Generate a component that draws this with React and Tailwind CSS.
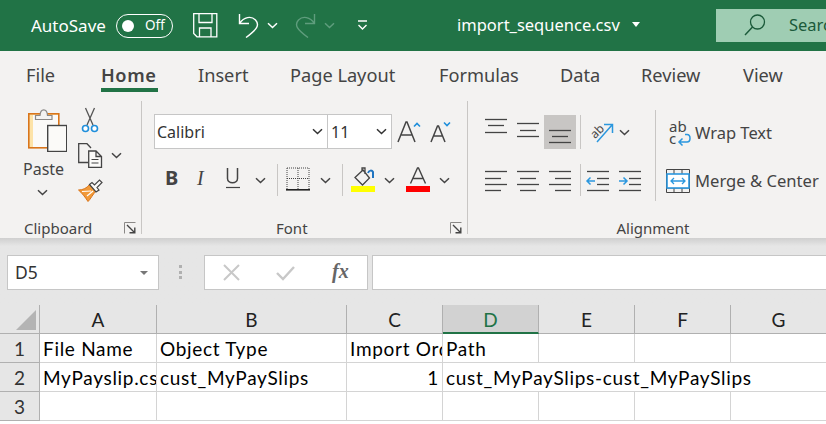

const UI = { fontFamily: '"Noto Sans", "Open Sans", sans-serif' };

function Chevron({ className = "", color = "#444" }) {
  return (
    <svg width="11" height="7" viewBox="0 0 11 7" className={"shrink-0 " + className}>
      <path d="M1 1.2 L5.5 5.5 L10 1.2" fill="none" stroke={color} strokeWidth="1.5" />
    </svg>
  );
}

function Launcher() {
  return (
    <svg width="12" height="12" viewBox="0 0 12 12" className="shrink-0">
      <path d="M.5 11.5V.5H11.5" fill="none" stroke="#8a8886" strokeWidth="1" />
      <path d="M3 3 L10 10 M10.8 5.5V10.8H5.5" fill="none" stroke="#444" strokeWidth="1.4" />
    </svg>
  );
}

function Lines({ lines, children }) {
  return (
    <svg width="32" height="34" viewBox="0 0 32 34" className="shrink-0">
      {lines.map(([a, b, y], i) => (
        <path key={i} d={`M${a} ${y + 0.5}H${b}`} stroke="#444" strokeWidth="1.3" />
      ))}
      {children}
    </svg>
  );
}

function Sep({ className }) {
  return <div className={"w-px bg-[#c8c6c4] shrink-0 " + className} />;
}

function TitleBar() {
  return (
    <div className="h-[51px] bg-[#217346] flex items-center text-white shrink-0">
      <span className="ml-[31px] w-[85px] text-[17px] leading-none whitespace-nowrap">AutoSave</span>
      <div className="w-[57px] h-[24px] rounded-full border border-white flex items-center pl-[5px] shrink-0">
        <span className="w-[12px] h-[12px] rounded-full bg-white" />
        <span className="ml-[11px] text-[13.5px] leading-none">Off</span>
      </div>
      <svg width="25" height="25" viewBox="0 0 25 25" className="ml-[20px] shrink-0">
        <path d="M.7.7H23.8V23.8H4L.7 20.5Z M6 .7V9.5H19V.7 M6.5 23.8V15H18V23.8" fill="none" stroke="#fff" strokeWidth="1.3" />
      </svg>
      <svg width="24" height="25" viewBox="0 0 24 25" className="ml-[18px] shrink-0">
        <path d="M3.5 1V10.5H13 M3.5 10.5C8 4 15 2.5 19.5 7C24 12 21 16.5 10 24.5" fill="none" stroke="#fff" strokeWidth="1.4" />
      </svg>
      <Chevron className="ml-[7px]" color="#fff" />
      <svg width="24" height="25" viewBox="0 0 24 25" className="ml-[16px] shrink-0">
        <path d="M20.5 1V10.5H11 M20.5 10.5C16 4 9 2.5 4.5 7C0 12 3 16.5 14 24.5" fill="none" stroke="#5f9d7d" strokeWidth="1.4" />
      </svg>
      <Chevron className="ml-[6px]" color="#5f9d7d" />
      <svg width="11" height="11" viewBox="0 0 11 11" className="ml-[22px] shrink-0">
        <path d="M1 1H10 M1.5 5 L5.5 9 L9.5 5" fill="none" stroke="#fff" strokeWidth="1.4" />
      </svg>
      <span className="ml-[89px] w-[175px] text-[16.5px] leading-none whitespace-nowrap">import_sequence.csv</span>
      <span className="w-0 h-0 border-x-[4.5px] border-x-transparent border-t-[5px] border-t-white shrink-0 mt-[-2px]" />
      <div className="ml-[76px] flex-1 h-[33px] mb-[1px] bg-[#9fcdb3] flex items-center overflow-hidden text-[#1b5a3a]">
        <svg width="22" height="22" viewBox="0 0 22 22" className="ml-[28px] shrink-0">
          <circle cx="13.5" cy="8" r="7" fill="none" stroke="#1b5a3a" strokeWidth="1.3" />
          <path d="M8.5 13 L1 21" stroke="#1b5a3a" strokeWidth="1.4" />
        </svg>
        <span className="ml-[23px] text-[16.5px] leading-none whitespace-nowrap">Search</span>
      </div>
    </div>
  );
}

const tabs = [
  ["File", "w-[75px]"],
  ["Home", "w-[97px] font-semibold tracking-[0.6px]"],
  ["Insert", "w-[92px]"],
  ["Page Layout", "w-[149px]"],
  ["Formulas", "w-[121px]"],
  ["Data", "w-[81px]"],
  ["Review", "w-[102px]"],
  ["View", "w-[60px]"],
];

function Tabs() {
  return (
    <div className="h-[49px] flex pl-[26px] pt-[11px] text-[#444] text-[18.2px] leading-[26px] shrink-0">
      {tabs.map(([t, w]) => (
        <div key={t} className={"shrink-0 whitespace-nowrap " + w}>
          <span className="inline-flex flex-col">
            {t}
            {t === "Home" && <span className="h-[4px] bg-[#217346] mt-0 w-[57px]" />}
          </span>
        </div>
      ))}
    </div>
  );
}

function Clipboard() {
  return (
    <div className="w-[142px] h-[133px] mt-px border-r border-[#c8c6c4] flex flex-col shrink-0">
      <div className="flex pl-[23px] text-[#444]">
        <div className="w-[46px] flex flex-col items-start pt-[6px]">
          <svg width="42" height="45" viewBox="0 0 42 45" className="ml-[2px]">
            <rect x="3.8" y="6.8" width="30" height="34" fill="#fde3a8" stroke="#d9751b" strokeWidth="1.6" />
            <rect x="8" y="8" width="25" height="32" fill="#fbfaf8" />
            <path d="M10.5 12.5V8.5H15C15.5 1 22 1 22.5 8.5H27V12.5Z" fill="#f3f2f1" stroke="#8a8886" strokeWidth="1.2" />
            <rect x="23.7" y="19" width="19" height="26" transform="translate(-1 -.5)" fill="#fbfaf8" stroke="#444" strokeWidth="1.4" />
          </svg>
          <span className="text-[16px] leading-[22px] mt-[6px]">Paste</span>
          <Chevron className="mt-[9px] ml-[14px]" />
        </div>
        <div className="ml-[9px] flex flex-col pt-[6px]">
          <svg width="24" height="26" viewBox="0 0 24 26" className="shrink-0">
            <path d="M7.5 1 L15 18 M16.5 1 L9 18" stroke="#555" strokeWidth="1.3" fill="none" />
            <circle cx="7.5" cy="21.5" r="3" fill="#fff" stroke="#1f8fdb" strokeWidth="1.6" />
            <circle cx="16.5" cy="21.5" r="3" fill="#fff" stroke="#1f8fdb" strokeWidth="1.6" />
          </svg>
          <div className="flex items-center mt-[10px]">
            <svg width="25" height="25" viewBox="0 0 25 25" className="shrink-0">
              <path d="M10 19.5H.7V.7H9L13 5" fill="none" stroke="#444" strokeWidth="1.3" />
              <path d="M10.7 8H18L23.5 13.5V24.3H10.7Z M18 8V13.5H23.5" fill="#fbfaf8" stroke="#444" strokeWidth="1.3" />
              <path d="M13.5 16.5H20.5M13.5 20H20.5" stroke="#444" strokeWidth="1.1" />
            </svg>
            <Chevron className="ml-[8px]" />
          </div>
          <svg width="25" height="23" viewBox="0 0 25 23" className="shrink-0 mt-[11px]">
            <path d="M0.5 11 C5 11 9 9 11.5 5.5 L18 12 C15 15 12 21 10 22.5 C7 18 4 14 0.5 11Z" fill="#f19938" stroke="#d9751b" strokeWidth="1" />
            <path d="M4 12.5 L13 12 M9 17 L15 12" stroke="#fff" strokeWidth="1.2" fill="none" />
            <path d="M11.5 5.5 L14 3.5 L16.5 6 L21.5 1 L24 3.5 L19 8.5 L21 11 L18 13Z" fill="#fbfaf8" stroke="#444" strokeWidth="1.2" />
          </svg>
        </div>
      </div>
      <div className="mt-auto mb-[-4px] flex items-center pl-[24px] text-[#444] text-[15px] leading-[20px]">
        <span className="w-[100px]">Clipboard</span>
        <Launcher />
      </div>
    </div>
  );
}

function FontGroup() {
  return (
    <div className="w-[326px] h-[133px] mt-px border-r border-[#c8c6c4] flex flex-col shrink-0 text-[#444]">
      <div className="flex items-center pl-[12px] pt-[13px]">
        <div className="w-[174px] h-[35px] bg-white border border-[#c6c6c6] flex items-center pl-[2px] pr-[4px] text-[16px] text-[#333] shrink-0">
          <span className="flex-1">Calibri</span>
          <Chevron color="#333" />
        </div>
        <div className="w-[64px] h-[35px] bg-white border border-l-0 border-[#c6c6c6] flex items-center pl-[3px] pr-[4px] text-[16px] text-[#333] shrink-0">
          <span className="flex-1">11</span>
          <Chevron color="#333" />
        </div>
        <svg width="24" height="24" viewBox="0 0 24 24" className="ml-[5px] shrink-0">
          <path d="M1 22 L9 2 H10 L18 22 M4.5 15 H14.5" fill="none" stroke="#444" strokeWidth="1.5" />
          <path d="M17 6.5 L20 3.5 L23 6.5" fill="none" stroke="#1f8fdb" strokeWidth="1.6" />
        </svg>
        <svg width="22" height="24" viewBox="0 0 22 24" className="ml-[9px] shrink-0">
          <path d="M1 22 L7.5 6 H8.5 L15 22 M3.5 16 H12.5" fill="none" stroke="#444" strokeWidth="1.5" />
          <path d="M14 2.5 L17 5.5 L20 2.5" fill="none" stroke="#1f8fdb" strokeWidth="1.6" />
        </svg>
      </div>
      <div className="flex items-center h-[32px] mt-[15px] pl-[23px]">
        <span className="w-[26px] text-[20px] font-bold leading-none mt-[-5px]">B</span>
        <span className="w-[34px] text-[20px] italic leading-none pl-[6px] mt-[-5px] font-['Liberation_Serif']">I</span>
        <svg width="16" height="22" viewBox="0 0 16 22" className="shrink-0 mt-[-4px]">
          <path d="M2.5 1V11.5C2.5 17 12.5 17 12.5 11.5V1" fill="none" stroke="#444" strokeWidth="1.5" />
          <path d="M1 20.5H15" stroke="#444" strokeWidth="1.2" />
        </svg>
        <Chevron className="ml-[14px]" />
        <Sep className="h-[32px] ml-[11px]" />
        <svg width="24" height="24" viewBox="0 0 24 24" className="ml-[8px] shrink-0 mt-[-2px]">
          <path d="M1 1H23V22M1 1V22M12 1V22M1 11.5H23" fill="none" stroke="#444" strokeWidth="1" strokeDasharray="1 1" />
          <path d="M0 22.8H24" stroke="#222" strokeWidth="1.6" />
        </svg>
        <Chevron className="ml-[10px]" />
        <Sep className="h-[32px] ml-[11px]" />
        <svg width="24" height="25" viewBox="0 0 24 25" className="ml-[8px] shrink-0 mt-[-2px]">
          <path d="M4 10.5 L12 3 L18.5 11 L11.5 18 Z M11 4 V1 H14 V7" fill="none" stroke="#444" strokeWidth="1.3" />
          <path d="M17 6 C18 3 21 3 22 5 V11" fill="none" stroke="#1f74c0" strokeWidth="2" />
          <rect y="19" width="24" height="6" fill="#ffff00" />
        </svg>
        <Chevron className="ml-[9px]" />
        <svg width="24" height="25" viewBox="0 0 24 25" className="ml-[11px] shrink-0 mt-[-2px]">
          <path d="M4.5 16.5 L11.5 1 H12.5 L19.5 16.5 M7 11.5 H17" fill="none" stroke="#444" strokeWidth="1.4" />
          <rect y="19" width="24" height="6" fill="#ff0000" />
        </svg>
        <Chevron className="ml-[9px]" />
      </div>
      <div className="mt-auto mb-[-4px] flex items-center text-[15px] leading-[20px]">
        <span className="ml-[134px] w-[174px]">Font</span>
        <Launcher />
      </div>
    </div>
  );
}

const A = 5;
const B = 27;

function Alignment() {
  return (
    <div className="w-[370px] h-[133px] mt-px flex flex-col shrink-0 text-[#444]">
      <div className="flex h-[91px] mt-[9px]">
        <div className="w-[188px] h-[91px] border-r border-[#c8c6c4] pl-[12px] pt-[5px] shrink-0">
          <div className="flex items-center h-[34px]">
            <Lines lines={[[A, B, 4], [8, 24, 10], [A, B, 17]]} />
            <Lines lines={[[A, B, 8], [8, 24, 15], [A, B, 21]]} />
            <div className="w-[32px] h-[34px] bg-[#c8c6c4] shrink-0">
              <Lines lines={[[A, B, 15], [8, 24, 21], [A, B, 27]]} />
            </div>
            <Sep className="h-[34px] ml-[4px]" />
            <svg width="25" height="24" viewBox="0 0 25 24" className="ml-[8px] shrink-0">
              <text x="0" y="15" transform="rotate(-45 8 10)" fontSize="12" fill="#444" fontFamily="Noto Sans">ab</text>
              <path d="M8 22 L23 5 M15 4.5 H23.5 V13" fill="none" stroke="#2b97de" strokeWidth="1.5" />
            </svg>
            <Chevron className="ml-[5px]" />
          </div>
          <div className="flex items-center h-[32px] mt-[15px]">
            <Lines lines={[[A, B, 8], [A, 21, 15], [A, B, 21], [A, 21, 27]]} />
            <Lines lines={[[A, B, 8], [8, 24, 15], [A, B, 21], [8, 24, 27]]} />
            <Lines lines={[[A, B, 8], [11, B, 15], [A, B, 21], [11, B, 27]]} />
            <Sep className="h-[32px] ml-[4px]" />
            <div className="ml-px">
              <Lines lines={[[5, 27, 8], [15, 27, 15], [15, 27, 21], [5, 27, 27]]}>
                <path d="M5 18 H13 M8.5 14.5 L5 18 L8.5 21.5" fill="none" stroke="#2b97de" strokeWidth="1.5" />
              </Lines>
            </div>
            <Lines lines={[[5, 27, 8], [15, 27, 15], [15, 27, 21], [5, 27, 27]]}>
              <path d="M5 18 H13 M9.5 14.5 L13 18 L9.5 21.5" fill="none" stroke="#2b97de" strokeWidth="1.5" />
            </Lines>
          </div>
        </div>
        <div className="pl-[10px] pt-[8px] flex flex-col">
          <div className="flex items-center h-[32px]">
            <div className="w-[29px] h-[28px] relative shrink-0 pl-[3px] text-[15px] leading-[12px] text-[#444]">
              <span className="block">ab</span>
              <span className="block">c</span>
              <svg width="14" height="13" viewBox="0 0 14 13" className="absolute left-[11px] top-[13px]">
                <path d="M8 1.5 H10 C14 1.5 14 9 10 9 H2 M5.5 5.5 L2 9 L5.5 12.5" fill="none" stroke="#2b97de" strokeWidth="1.5" />
              </svg>
            </div>
            <span className="text-[16.5px] leading-none whitespace-nowrap mt-[-2px]">Wrap Text</span>
          </div>
          <div className="flex items-center h-[32px] mt-[15px]">
            <svg width="24" height="24" viewBox="0 0 24 24" className="shrink-0 mr-[5px]">
              <path d="M.5.5H23.5V23.5H.5Z M8 .5V5 M16 .5V5 M8 19V23.5 M16 19V23.5 M.5 19H23.5" fill="none" stroke="#444" strokeWidth="1" />
              <rect x="1" y="5" width="22" height="14" fill="#fff" stroke="#2b97de" strokeWidth="1.6" />
              <path d="M5 12 H19 M8 9 L5 12 L8 15 M16 9 L19 12 L16 15" fill="none" stroke="#2b97de" strokeWidth="1.3" />
            </svg>
            <span className="text-[16.6px] leading-none whitespace-nowrap">Merge &amp; Center</span>
          </div>
        </div>
      </div>
      <div className="mt-auto mb-[-4px] text-[15px] leading-[20px] text-center">Alignment</div>
    </div>
  );
}

function FormulaBar() {
  return (
    <div className="h-[67px] bg-[#e6e6e6] flex items-start pt-[17px] pl-[7px] shrink-0 bg-gradient-to-b from-[#cfcfcf] from-0% to-[#e6e6e6] to-[12%]">
      <div className="w-[152px] h-[35px] bg-white border border-[#c6c6c6] flex items-center pl-[7px] pr-[10px] text-[#333] text-[17.5px] shrink-0">
        <span className="flex-1">D5</span>
        <span className="w-0 h-0 border-x-[4px] border-x-transparent border-t-[4px] border-t-[#777]" />
      </div>
      <div className="ml-[20px] mt-[10px] flex flex-col gap-[2.5px] shrink-0">
        <span className="w-[3px] h-[3px] bg-[#b0b0b0]" />
        <span className="w-[3px] h-[3px] bg-[#b0b0b0]" />
        <span className="w-[3px] h-[3px] bg-[#b0b0b0]" />
      </div>
      <div className="ml-[22px] w-[164px] h-[35px] bg-white border border-[#c6c6c6] flex items-center shrink-0">
        <svg width="17" height="17" viewBox="0 0 17 17" className="ml-[18px] shrink-0">
          <path d="M1 1 L16 16 M16 1 L1 16" stroke="#c8c8c8" strokeWidth="2" />
        </svg>
        <svg width="19" height="16" viewBox="0 0 19 16" className="ml-[36px] shrink-0">
          <path d="M1 8 L7 14 L18 2" fill="none" stroke="#c8c8c8" strokeWidth="2.4" />
        </svg>
        <span className="ml-[37px] text-[20px] font-bold italic leading-none mt-[-3px] text-[#666] font-['Liberation_Serif']">fx</span>
      </div>
      <div className="ml-[4px] flex-1 h-[35px] bg-white border border-[#c6c6c6] border-r-0" />
    </div>
  );
}

const CELL = "h-[29px] border-r border-b border-[#d4d4d4] overflow-hidden whitespace-nowrap leading-[30px] pl-[3px] text-black tracking-[0.7px]";
const RH = "h-[29px] border-r border-b border-[#b0b0b0] bg-[#e6e6e6] text-center leading-[30px] text-[#333]";

function Sheet() {
  const head = ["A", "B", "C", "D", "E", "F", "G"];
  return (
    <div
      className="grid grid-cols-[40px_117px_190px_96px_96px_96px_96px_96px] grid-rows-[29px_29px_29px_29px] bg-white text-[19px]"
      style={{ fontFamily: '"Lato", "Carlito", sans-serif' }}
    >
      <div className="h-[29px] bg-[#e6e6e6] border-r border-b border-[#b0b0b0] flex items-end justify-end pr-[3px] pb-[3px]">
        <span className="w-0 h-0 border-l-[20px] border-l-transparent border-b-[20px] border-b-[#b4b4b4]" />
      </div>
      {head.map((h) => (
        <div
          key={h}
          className={
            h === "D"
              ? "h-[29px] bg-[#d2d2d2] border-r border-[#b0b0b0] border-b-2 border-b-[#217346] text-center leading-[30px] text-[#217346]"
              : "h-[29px] bg-[#e6e6e6] border-r border-b border-[#b0b0b0] text-center leading-[30px] text-[#222]"
          }
        >
          {h}
        </div>
      ))}

      <div className={RH}>1</div>
      <div className={CELL}>File Name</div>
      <div className={CELL}>Object Type</div>
      <div className={CELL + " tracking-[0.4px]"}>Import Order</div>
      <div className={CELL}>Path</div>
      <div className={CELL} />
      <div className={CELL} />
      <div className={CELL} />

      <div className={RH}>2</div>
      <div className={CELL}>MyPayslip.csv</div>
      <div className={CELL}>cust_MyPaySlips</div>
      <div className={CELL + " text-right pr-[3px]"}>1</div>
      <div className={CELL + " col-span-4"}>cust_MyPaySlips-cust_MyPaySlips</div>

      <div className={RH}>3</div>
      <div className={CELL} />
      <div className={CELL} />
      <div className={CELL} />
      <div className={CELL} />
      <div className={CELL} />
      <div className={CELL} />
      <div className={CELL} />
    </div>
  );
}

export default function App() {
  return (
    <div className="w-[826px] h-[424px] overflow-hidden flex flex-col bg-[#f3f2f1]" style={UI}>
      <TitleBar />
      <Tabs />
      <div className="h-[138px] flex shrink-0">
        <Clipboard />
        <FontGroup />
        <Alignment />
      </div>
      <FormulaBar />
      <Sheet />
      <div className="flex-1 bg-white" />
    </div>
  );
}
